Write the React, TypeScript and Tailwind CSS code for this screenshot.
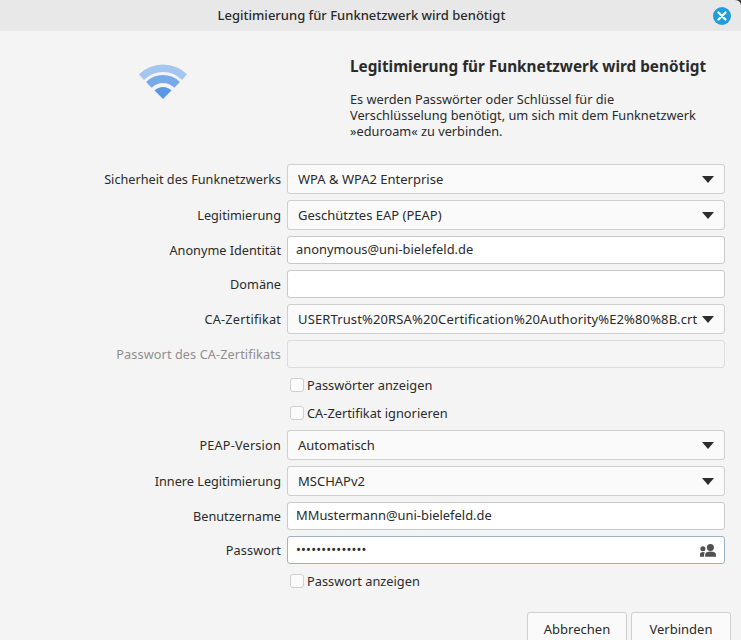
const font = { fontFamily: '"Noto Sans", sans-serif' };

function Arrow() {
  return (
    <svg width="12" height="7" viewBox="0 0 12 7" className="shrink-0">
      <path d="M0 0H12L6 7Z" fill="#2d2d2d" />
    </svg>
  );
}

function Label({ children, muted, extra = "" }: { children: string; muted?: boolean; extra?: string }) {
  return (
    <div className={`text-right text-[12.7px] leading-none self-center ${extra} ${muted ? "text-[#8f8f8f]" : "text-[#2b2b2b]"}`}>
      {children}
    </div>
  );
}

function Combo({ value, wide }: { value: string; wide?: boolean }) {
  return (
    <div className="h-[30px] flex items-center justify-between pl-[10px] pr-[10px] rounded-[3px] border border-[#cfcfcf] bg-[#fafafa] text-[13px] text-[#2b2b2b]">
      <span className={`pt-[2px] ${wide ? "tracking-[0.13px]" : ""}`}>{value}</span>
      <Arrow />
    </div>
  );
}

function Entry({ value, disabled, focused, dots, children }: { value?: string; disabled?: boolean; focused?: boolean; dots?: boolean; children?: React.ReactNode }) {
  return (
    <div
      className={`h-[28px] flex items-center justify-between pl-[8px] pr-[8px] rounded-[3px] border text-[12.9px] text-[#2b2b2b] ${
        disabled ? "bg-[#f5f5f5] border-[#dcdcdc]" : focused ? "bg-white border-[#9ab3c9]" : "bg-white border-[#c8c8c8]"
      }`}
    >
      <span className={dots ? "tracking-[0.2px]" : ""}>{value}</span>
      {children}
    </div>
  );
}

function Check({ label }: { label: string }) {
  return (
    <div className="h-[22px] flex items-center pl-[3px] gap-[3px] text-[12.8px] text-[#2b2b2b]">
      <span className="w-[14px] h-[14px] rounded-[3px] border border-[#cfcfcf] bg-[#fbfbfb]" />
      <span className="pt-[2px]">{label}</span>
    </div>
  );
}

function People() {
  return (
    <svg width="16" height="13" viewBox="0 0 16 13" fill="#505050">
      <circle cx="2.9" cy="4.8" r="2.5" />
      <path d="M0 12.8V10.6C0 9 1 8 2.9 8c.9 0 1.5.2 2 .5-.5.5-.8 1.2-.8 2v2.3Z" />
      <circle cx="10.4" cy="3.6" r="3.5" />
      <path d="M5.2 12.8V10.6C5.2 8.6 7.4 7.6 10.5 7.6S16 8.6 16 10.6v2.2Z" />
    </svg>
  );
}

function Wifi() {
  return (
    <svg width="60" height="44" viewBox="0 0 60 44">
      <path d="M6 15.2A34.5 34.5 0 0 1 54 15.2L49.09 20.91A27 27 0 0 0 10.91 20.91Z" fill="#a4c6ef" />
      <path d="M13.03 23.03A24 24 0 0 1 46.97 23.03L41.31 28.69A16 16 0 0 0 18.69 28.69Z" fill="#78a9e8" />
      <path d="M21.51 31.51A12 12 0 0 1 38.49 31.51L30 40Z" fill="#5a97e5" />
    </svg>
  );
}

const button =
  "w-[100px] h-[34px] pt-[2px] rounded-[3px] border border-[#cfcfcf] bg-[#fafafa] flex items-center justify-center text-[13px] text-[#2b2b2b]";

export default function App() {
  return (
    <div className="relative w-[741px] h-[640px] overflow-hidden bg-[#f4f4f4]" style={font}>
      <div className="h-[31px] bg-[#e8e8e8] flex items-center">
        <div className="flex-1 text-center pl-[10px] text-[13px] font-medium text-[#2b2b2b]">
          Legitimierung für Funknetzwerk wird benötigt
        </div>
        <div className="w-[18px] h-[18px] mr-[10px] rounded-full bg-[#1f9ede] flex items-center justify-center">
          <svg width="10" height="10" viewBox="0 0 10 10">
            <path d="M1.5 1.5L8.5 8.5M8.5 1.5L1.5 8.5" stroke="white" strokeWidth="2.2" strokeLinecap="round" />
          </svg>
        </div>
      </div>
      <svg width="6" height="6" viewBox="0 0 6 6" className="absolute top-0 right-0">
        <path d="M0 0H6V6Q6 0.5 0 0Z" fill="#3a3a3a" />
      </svg>
      <div className="flex h-[133px]">
        <div className="w-[350px] pl-[133px] pt-[28px] shrink-0">
          <Wifi />
        </div>
        <div className="w-[370px] pt-[24px]">
          <div className="text-[15.3px] leading-[22px] font-bold text-[#2b2b2b]">
            Legitimierung für Funknetzwerk wird benötigt
          </div>
          <div className="mt-[14px] text-[12.75px] leading-[16px] text-[#2b2b2b]">
            Es werden Passwörter oder Schlüssel für die
            <br />
            Verschlüsselung benötigt, um sich mit dem Funknetzwerk
            <br />
            »eduroam« zu verbinden.
          </div>
        </div>
      </div>
      <div className="grid grid-cols-[281px_438px] gap-x-[6px] gap-y-[6px]">
        <Label>Sicherheit des Funknetzwerks</Label>
        <Combo value="WPA & WPA2 Enterprise" />
        <Label>Legitimierung</Label>
        <Combo value="Geschütztes EAP (PEAP)" />
        <Label>Anonyme Identität</Label>
        <Entry value="anonymous@uni-bielefeld.de" />
        <Label>Domäne</Label>
        <Entry />
        <Label extra="tracking-[0.2px]">CA-Zertifikat</Label>
        <Combo wide value="USERTrust%20RSA%20Certification%20Authority%E2%80%8B.crt" />
        <Label muted extra="tracking-[0.1px]">Passwort des CA-Zertifikats</Label>
        <Entry disabled />
        <div />
        <Check label="Passwörter anzeigen" />
        <div />
        <Check label="CA-Zertifikat ignorieren" />
        <Label extra="tracking-[0.2px]">PEAP-Version</Label>
        <Combo value="Automatisch" />
        <Label>Innere Legitimierung</Label>
        <Combo value="MSCHAPv2" />
        <Label>Benutzername</Label>
        <Entry value="MMustermann@uni-bielefeld.de" />
        <Label extra="tracking-[0.1px]">Passwort</Label>
        <Entry dots value="••••••••••••••" focused>
          <People />
        </Entry>
        <div />
        <Check label="Passwort anzeigen" />
      </div>
      <div className="flex justify-end gap-[4px] pr-[10px] mt-[20px]">
        <div className={button}>Abbrechen</div>
        <div className={button}>Verbinden</div>
      </div>
    </div>
  );
}
